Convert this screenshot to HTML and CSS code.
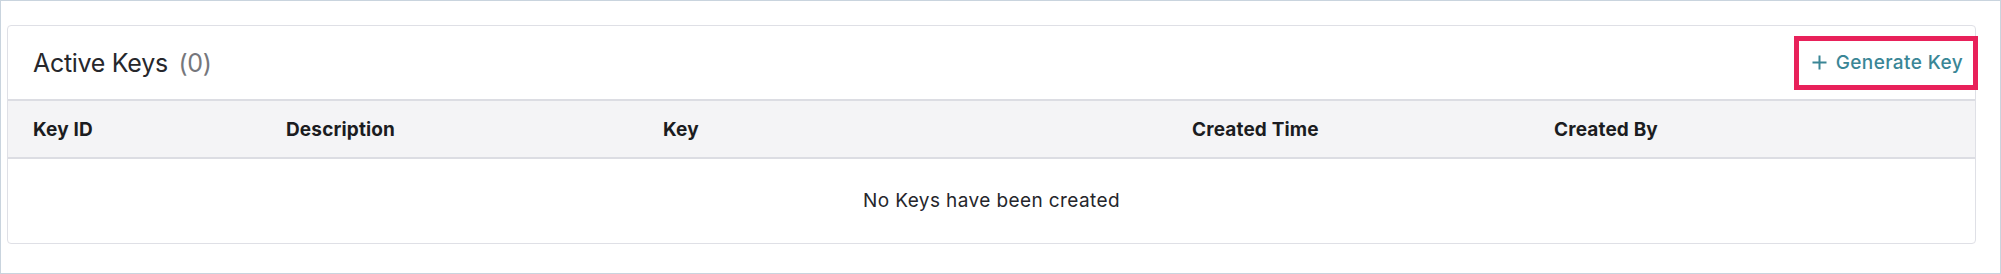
FILE: index.html
```html
<!DOCTYPE html>
<html lang="en">
<head>
<meta charset="utf-8">
<title>Active Keys</title>
<link rel="stylesheet" href="styles.css">
</head>
<body>
<div class="frame">
  <section class="card">
    <header class="card-head">
      <h2 class="title">Active Keys <span class="count">(0)</span></h2>
      <button class="gen-btn" type="button">
        <svg class="plus" width="15" height="15" viewBox="0 0 15 15" aria-hidden="true"><path d="M7.5 0.5v14M0.5 7.5h14" stroke="currentColor" stroke-width="2" fill="none"/></svg>
        <span>Generate Key</span>
      </button>
    </header>
    <div class="table">
      <div class="thead">
        <div class="th">Key ID</div>
        <div class="th">Description</div>
        <div class="th">Key</div>
        <div class="th">Created Time</div>
        <div class="th">Created By</div>
      </div>
      <div class="empty">No Keys have been created</div>
    </div>
  </section>
</div>
</body>
</html>
```

FILE: styles.css
```css
* { box-sizing: border-box; }
html, body { margin: 0; padding: 0; background: #ffffff; }
body { font-family: "Inter", "Lato", "Liberation Sans", sans-serif; color: #1e1f24; }

.frame {
  width: 2001px;
  height: 274px;
  border: 1px solid #c9d4de;
  padding: 24px 24px 0 6px;
  background: #ffffff;
}

.card {
  border: 1px solid #dfe0e6;
  border-radius: 4px;
  background: #ffffff;
  height: 219px;
  display: flex;
  flex-direction: column;
}

.card-head {
  height: 73px;
  display: flex;
  align-items: center;
  justify-content: space-between;
  padding: 0 12px 0 25px;
}

.title {
  margin: 0;
  font-size: 25px;
  font-weight: 400;
  color: #26272c;
  letter-spacing: -0.3px;
}
.count { color: #76777c; margin-left: 4px; }

.gen-btn {
  position: relative;
  display: inline-flex;
  align-items: center;
  gap: 9px;
  border: 0;
  background: transparent;
  padding: 0;
  height: 24px;
  font-family: inherit;
  font-size: 19px;
  font-weight: 500;
  color: #3a8696;
  letter-spacing: 0.4px;
  cursor: pointer;
}
.gen-btn::after {
  content: "";
  position: absolute;
  top: -15px;
  bottom: -15px;
  left: -18px;
  right: -15px;
  border: 5px solid #e8215a;
}
.plus { display: block; }

.table { flex: 1; display: flex; flex-direction: column; }

.thead {
  display: grid;
  grid-template-columns: 253px 377px 529px 362px 1fr;
  height: 60px;
  align-items: center;
  background: #f4f4f6;
  border-top: 2px solid #dcdde3;
  border-bottom: 2px solid #dcdde3;
}
.th {
  padding-left: 25px;
  font-size: 19px;
  font-weight: 700;
  color: #1b1c21;
  letter-spacing: 0.15px;
}

.empty {
  flex: 1;
  display: flex;
  align-items: center;
  justify-content: center;
  font-size: 19px;
  color: #25262b;
  letter-spacing: 0.4px;
  padding-bottom: 2px;
}
```
